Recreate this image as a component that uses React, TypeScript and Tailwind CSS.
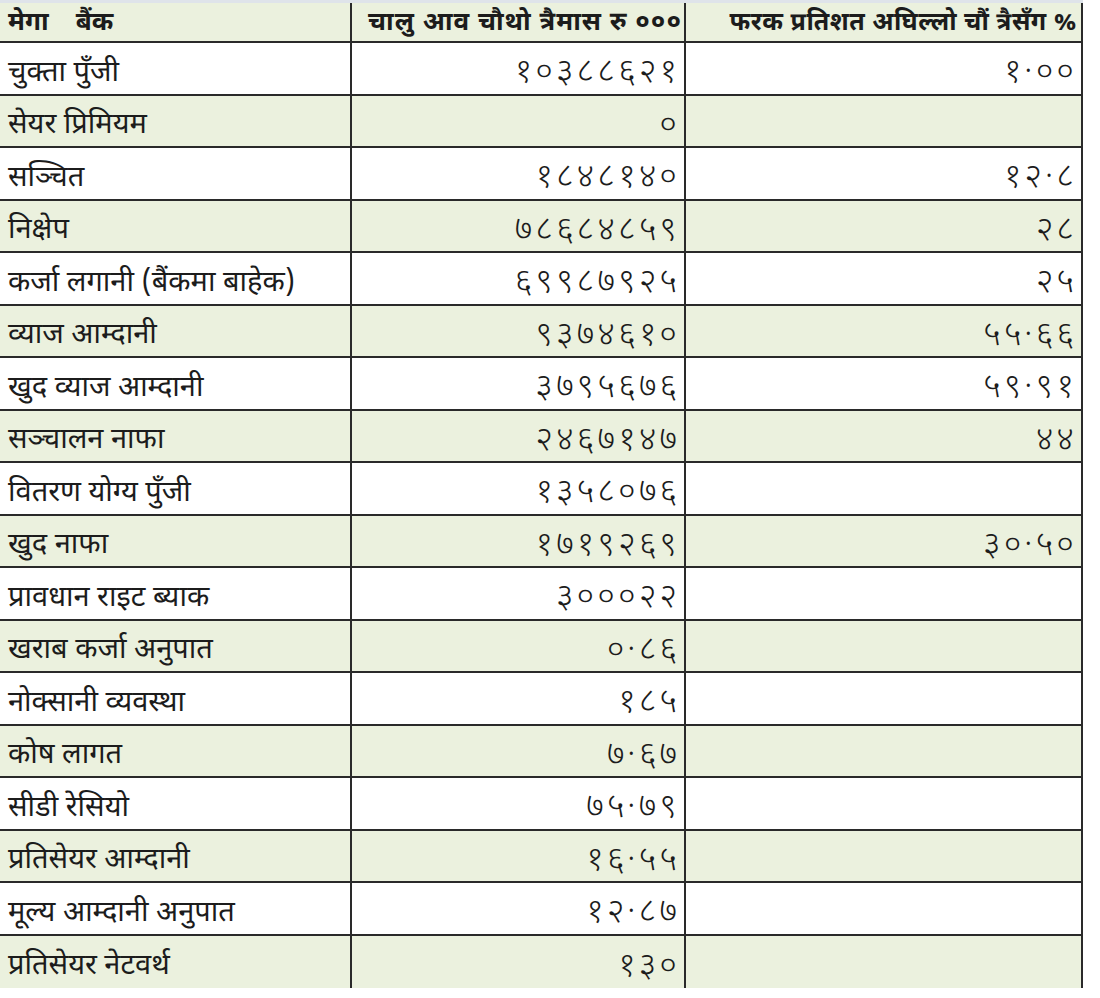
const rows: [string, string, string][] = [
  ["चुक्ता पुँजी", "१०३८८६२१", "१·००"],
  ["सेयर प्रिमियम", "०", ""],
  ["सञ्चित", "१८४८१४०", "१२·८"],
  ["निक्षेप", "७८६८४८५९", "२८"],
  ["कर्जा लगानी (बैंकमा बाहेक)", "६९९८७९२५", "२५"],
  ["व्याज आम्दानी", "९३७४६१०", "५५·६६"],
  ["खुद व्याज आम्दानी", "३७९५६७६", "५९·९१"],
  ["सञ्चालन नाफा", "२४६७१४७", "४४"],
  ["वितरण योग्य पुँजी", "१३५८०७६", ""],
  ["खुद नाफा", "१७१९२६९", "३०·५०"],
  ["प्रावधान राइट ब्याक", "३०००२२", ""],
  ["खराब कर्जा अनुपात", "०·८६", ""],
  ["नोक्सानी व्यवस्था", "१८५", ""],
  ["कोष लागत", "७·६७", ""],
  ["सीडी रेसियो", "७५·७९", ""],
  ["प्रतिसेयर आम्दानी", "१६·५५", ""],
  ["मूल्य आम्दानी अनुपात", "१२·८७", ""],
  ["प्रतिसेयर नेटवर्थ", "१३०", ""],
];

export default function App() {
  return (
    <div className="min-h-[998px] w-[1100px] bg-white font-['Noto_Sans_Devanagari','Noto_Sans',sans-serif] text-[#1c1c1c]">
      <div className="h-[3px] w-[1083px] bg-[#dfe4ea]" />
      <div className="grid w-[1083px] grid-cols-[352px_334px_397px]">
        <div className="flex h-[40px] items-center border-b-2 border-r-2 border-[#2a2a2a] bg-[#ebf1de] pl-2 pt-1 text-[26px] leading-none font-bold">
          मेगा&nbsp;&nbsp;&nbsp; बैंक
        </div>
        <div className="flex h-[40px] items-center justify-end overflow-hidden whitespace-nowrap border-b-2 border-r-2 border-[#2a2a2a] bg-[#ebf1de] pr-0.5 pt-1 text-[26px] leading-none font-bold tracking-[1px]">
          चालु आव चौथो त्रैमास रु ०००
        </div>
        <div className="flex h-[40px] items-center justify-end whitespace-nowrap border-b-2 border-r-2 border-[#2a2a2a] bg-[#ebf1de] pr-1 pt-1 text-[25px] leading-none font-bold tracking-[0.5px]">
          फरक प्रतिशत अघिल्लो चौं त्रैसँग %
        </div>

        {rows.map(([label, value, change], i) => {
          const bg = i % 2 === 0 ? "bg-white" : "bg-[#ebf1de]";
          const last = i === rows.length - 1;
          return (
            <div key={label} className="contents">
              <div
                className={`flex h-[52.5px] items-center pl-2 pt-3 text-[29px] leading-none ${bg} border-r-2 border-[#2a2a2a] ${last ? "" : "border-b-2"}`}
              >
                {label}
              </div>
              <div
                className={`flex h-[52.5px] items-center justify-end pr-1 pt-3 text-[34px] leading-none font-light tracking-[3px] ${bg} border-r-2 border-[#2a2a2a] ${last ? "" : "border-b-2"}`}
              >
                {value}
              </div>
              <div
                className={`flex h-[52.5px] items-center justify-end pr-1 pt-3 text-[34px] leading-none font-light tracking-[3px] ${bg} border-r-2 border-[#2a2a2a] ${last ? "" : "border-b-2"}`}
              >
                {change}
              </div>
            </div>
          );
        })}
      </div>
    </div>
  );
}
